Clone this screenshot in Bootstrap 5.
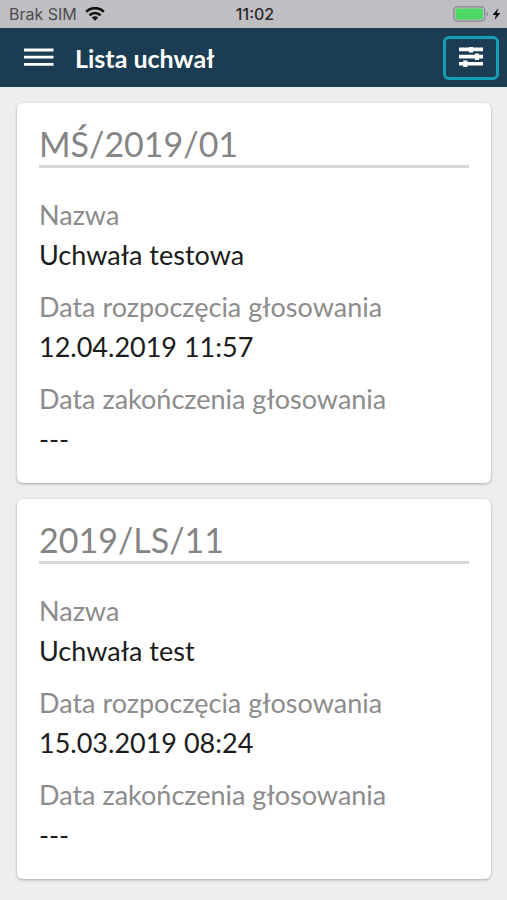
<!DOCTYPE html>
<html lang="pl">
<head>
<meta charset="utf-8">
<meta name="viewport" content="width=device-width, initial-scale=1">
<title>Lista uchwał</title>
<link href="https://cdn.jsdelivr.net/npm/bootstrap@5.3.0/dist/css/bootstrap.min.css" rel="stylesheet">
<style>
  body { background: #efedee; font-family: Lato, sans-serif; color: #1c1c1c; }
  .status-bar { height: 28px; background: #bfbec3; font-family: Inter, sans-serif; font-size: 16px; line-height: 28px; padding: 0 6px 0 9px; }
  .carrier { color: #4c4b4f; }
  .clock { color: #29292b; font-weight: 500; }
  .app-bar { height: 59px; background: #1b3c52; padding: 0 8px 0 24px; }
  .menu-btn { line-height: 0; }
  .app-title { font-size: 25px; line-height: 32px; font-weight: 700; margin-left: 21px; }
  .filter-btn { width: 56px; height: 44px; border: 3px solid #169fb3; border-radius: 6px; line-height: 0; }
  .resolutions { padding: 16px 16px 16px 17px; gap: 16px; }
  .resolution { border-radius: 6px; padding: 20px 22px 24px; box-shadow: 0 1px 3px rgba(0, 0, 0, .3); }
  .resolution-no { color: #858585; font-size: 34px; line-height: 42px; border-bottom: 3px solid #d6d6d6; margin-bottom: 27px; }
  .fields { font-size: 27px; line-height: 40px; }
  .fields dt { color: #8c8c8c; }
  .fields dd + dt { margin-top: 12px; }
</style>
</head>
<body>
<div class="status-bar d-flex align-items-center">
  <div class="carrier col d-flex align-items-center gap-2">Brak SIM
    <svg width="20" height="14" viewBox="0 0 20 14" fill="none" stroke="#111" stroke-width="2.6" aria-hidden="true"><path d="M1.2 4.7C6.2-.1 13.8-.1 18.8 4.7M4.5 8.2c3.1-2.9 7.9-2.9 11 0"/><path d="M6.8 10.6c1.8-1.8 4.6-1.8 6.4 0L10 13.8z" fill="#111" stroke="none"/></svg>
  </div>
  <div class="clock">11:02</div>
  <div class="col d-flex justify-content-end align-items-center">
    <svg width="48" height="18" viewBox="0 0 48 18" aria-hidden="true"><rect x=".8" y="1.8" width="31" height="14.4" rx="3.6" fill="none" stroke="#88888c" stroke-width="1.3"/><rect x="2.6" y="3.6" width="27.4" height="10.8" rx="1.8" fill="#4bd964"/><path d="M33.6 6.8c2 .7 2 3.7 0 4.4z" fill="#88888c"/><path d="M45.4 3l-5.9 6.9h3.4L41.6 15l5.8-7h-3.5z" fill="#111"/></svg>
  </div>
</div>
<header class="app-bar d-flex align-items-center text-white">
  <button type="button" class="menu-btn btn p-0 border-0" aria-label="Menu">
    <svg width="30" height="20" viewBox="0 0 30 20" stroke="#fff" stroke-width="2.8" aria-hidden="true"><path d="M0 2h29.5M0 9.2h29.5M0 16.4h29.5"/></svg>
  </button>
  <h1 class="app-title mb-0">Lista uchwał</h1>
  <button type="button" class="filter-btn btn p-0 ms-auto" aria-label="Filtry">
    <svg width="24" height="22" viewBox="0 0 24 22" stroke="#fff" stroke-width="3.6" stroke-linecap="butt" aria-hidden="true"><path d="M0 2.4h24M0 9.6h24M0 16.8h24"/><path d="M12 0v5.4M18 6.6v6.4M6.3 13.6V20" stroke-width="4.2"/></svg>
  </button>
</header>
<main class="resolutions d-flex flex-column">
  <article class="resolution bg-white">
    <h2 class="resolution-no fw-normal">MŚ/2019/01</h2>
    <dl class="fields mb-0">
      <dt class="fw-normal">Nazwa</dt><dd class="mb-0">Uchwała testowa</dd>
      <dt class="fw-normal">Data rozpoczęcia głosowania</dt><dd class="mb-0">12.04.2019 11:57</dd>
      <dt class="fw-normal">Data zakończenia głosowania</dt><dd class="mb-0">---</dd>
    </dl>
  </article>
  <article class="resolution bg-white">
    <h2 class="resolution-no fw-normal">2019/LS/11</h2>
    <dl class="fields mb-0">
      <dt class="fw-normal">Nazwa</dt><dd class="mb-0">Uchwała test</dd>
      <dt class="fw-normal">Data rozpoczęcia głosowania</dt><dd class="mb-0">15.03.2019 08:24</dd>
      <dt class="fw-normal">Data zakończenia głosowania</dt><dd class="mb-0">---</dd>
    </dl>
  </article>
</main>
<script src="https://cdn.jsdelivr.net/npm/bootstrap@5.3.0/dist/js/bootstrap.bundle.min.js"></script>
</body>
</html>
